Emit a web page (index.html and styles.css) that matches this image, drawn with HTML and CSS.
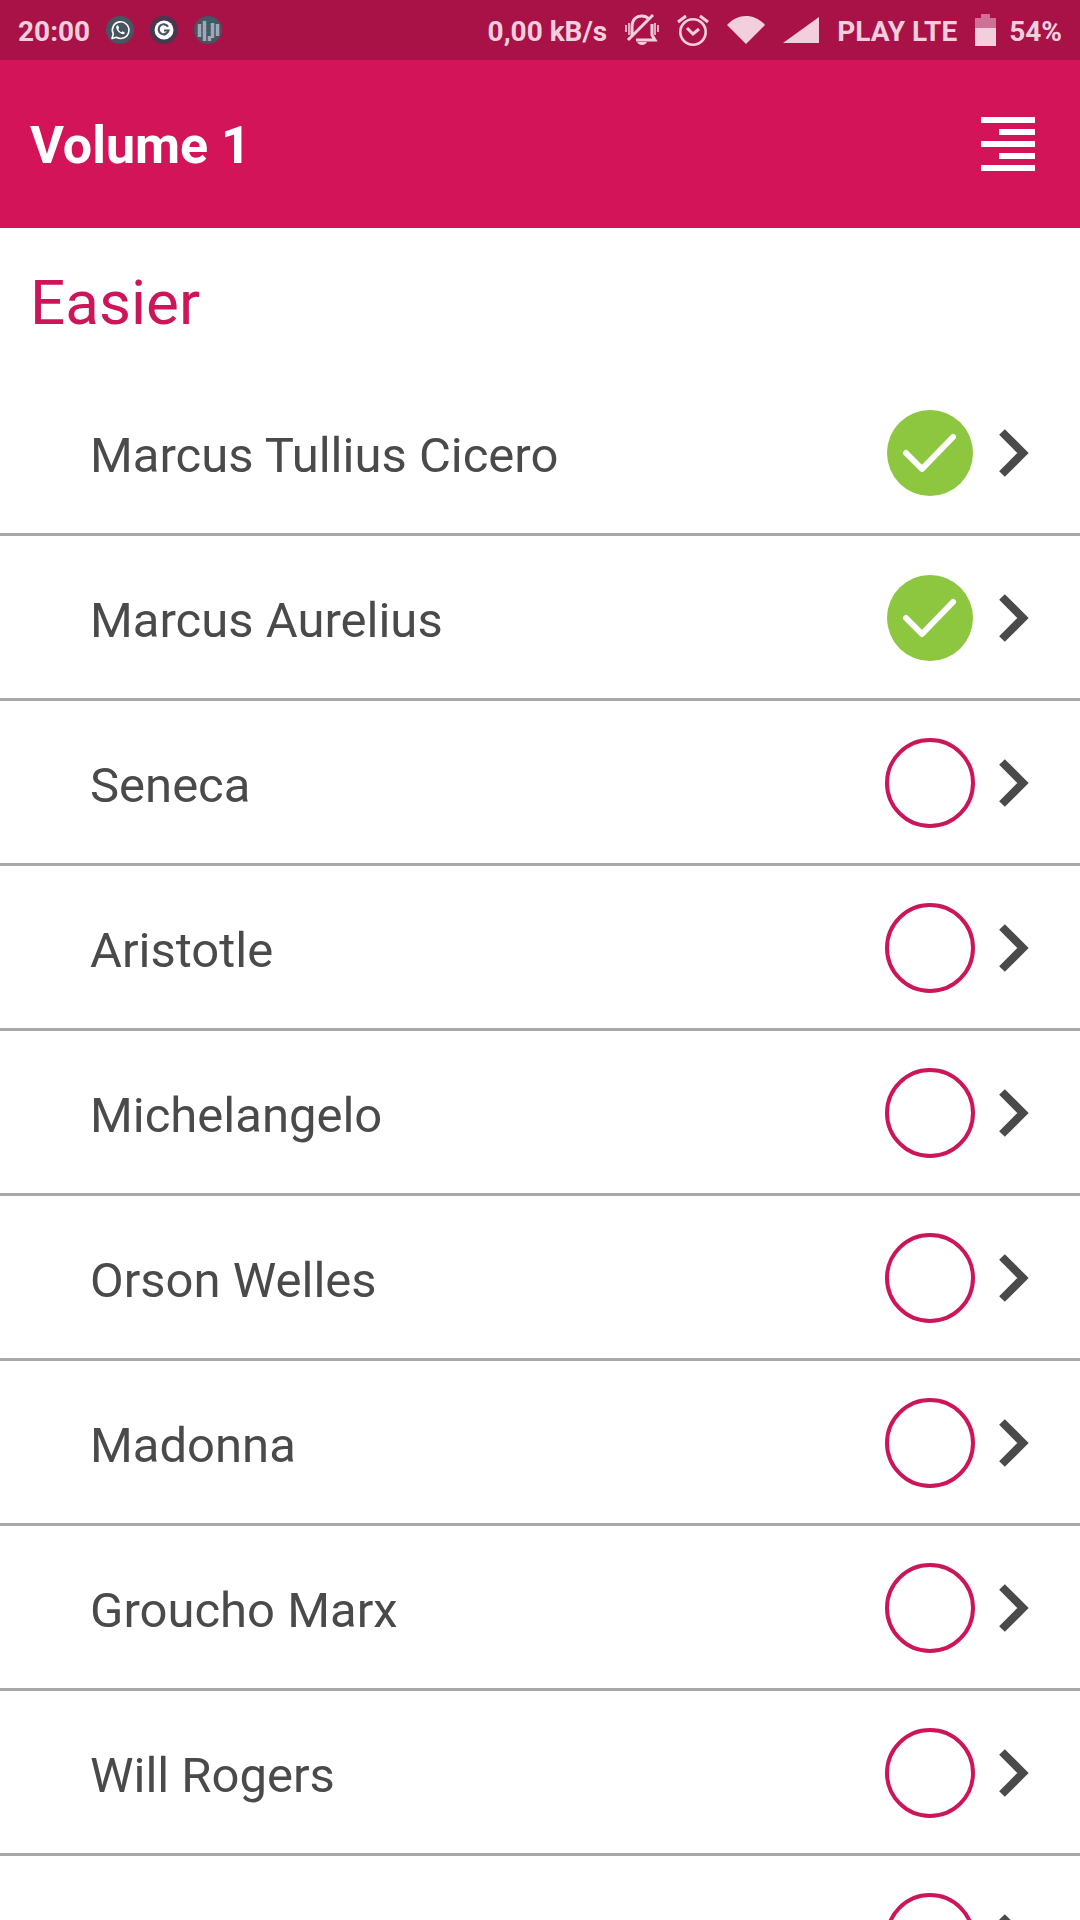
FILE: index.html
```html
<!DOCTYPE html>
<html lang="en">
<head>
    <meta charset="UTF-8">
    <meta name="viewport" content="width=device-width, initial-scale=1.0">
    <title>Volume 1</title>
    <link rel="stylesheet" href="styles.css">
</head>

<body>
    <!-- Shared icons -->
    <svg class="sprite" aria-hidden="true">
        <symbol id="done" viewBox="0 0 90 90">
            <circle cx="45" cy="45" r="43" fill="#8dc63f"/>
            <path d="M21 45L37 61L68 29" fill="none" stroke="#fff" stroke-width="6" stroke-linecap="round" stroke-linejoin="round"/>
        </symbol>
        <symbol id="todo" viewBox="0 0 90 90">
            <circle cx="45" cy="45" r="43" fill="none" stroke="#cd1659" stroke-width="4"/>
        </symbol>
        <symbol id="chevron" viewBox="0 0 30 48">
            <path d="M3 3L24 24L3 45" fill="none" stroke="#4a4a4a" stroke-width="8"/>
        </symbol>
    </svg>

    <div class="screen">
        <div class="status-bar">
            <div class="status-left">
                <span>20:00</span>
                <svg class="notice" viewBox="0 0 28 28" aria-hidden="true">
                    <circle cx="14" cy="14" r="14" fill="#465560"/>
                    <path d="M6 22.500L7.300 18A8.300 8.300 0 1 1 10.300 21.200Z" fill="none" stroke="#fff" stroke-width="1.600" stroke-linejoin="round"/>
                    <path d="M11 9.500C9 11 11 14.500 13 16.300C15 18.200 18 19 19 17L16.700 15.300L15.300 16.300C14 15.800 13 14.700 12.300 13.300L13.200 12L12 9.300Z" fill="#fff"/>
                </svg>
                <svg class="notice" viewBox="0 0 28 28" aria-hidden="true">
                    <circle cx="14" cy="14" r="14" fill="#46384f"/>
                    <circle cx="14" cy="14" r="9.500" fill="#fff"/>
                    <path d="M18 10.800A5 5 0 1 0 18.500 14.500H14" fill="none" stroke="#465560" stroke-width="2.200"/>
                </svg>
                <svg class="notice" viewBox="0 0 28 28" aria-hidden="true">
                    <circle cx="14" cy="14" r="14" fill="#465560"/>
                    <path d="M7 4.500H21M4 8.500H24M2 12.500H26M2 16.500H26" stroke="#2f6a6e" stroke-width="1.500"/>
                    <path d="M5.500 8V21M10.500 5V25M15.500 20V25M18.500 7V22M23.500 8V20" stroke="#a5a5b6" stroke-width="3.500"/>
                </svg>
            </div>
            <div class="status-right">
                <span>0,00 kB/s</span>
                <svg class="bell" viewBox="0 0 34 32" aria-hidden="true">
                    <path d="M7 23V13C7 6 11 2 17 2C20 2 22 3 24 5M27 10V21L30 26H11M3 26L28 1" fill="none" stroke="currentColor" stroke-width="3"/>
                    <path d="M12 28H22C20 32 14 32 12 28Z" fill="currentColor"/>
                    <path d="M1 11V18M4 9V21M30 9V21M33 11V18" stroke="currentColor" stroke-width="1.600"/>
                </svg>
                <svg class="alarm" viewBox="0 0 32 32" aria-hidden="true">
                    <circle cx="16" cy="18" r="12.700" fill="none" stroke="currentColor" stroke-width="2.600"/>
                    <path d="M10 14L16 20L22 15M1 8L9 2M31 8L23 2" fill="none" stroke="currentColor" stroke-width="3"/>
                </svg>
                <svg class="wifi" viewBox="0 0 38 28" aria-hidden="true">
                    <path d="M0 9C11 -3 27 -3 38 9L19 28Z" fill="currentColor"/>
                </svg>
                <svg class="signal" viewBox="0 0 36 26" aria-hidden="true">
                    <path d="M0 26L36 0V26Z" fill="currentColor"/>
                </svg>
                <span>PLAY LTE</span>
                <div class="charge">
                    <svg class="battery" viewBox="0 0 21 32" aria-hidden="true">
                        <path d="M6 0H15V4H21V14H0V4H6Z" fill="#cd7196"/>
                        <path d="M0 14H21V32H0Z" fill="currentColor"/>
                    </svg>
                    <span>54%</span>
                </div>
            </div>
        </div>

        <header class="app-bar">
            <h1>Volume 1</h1>
            <button class="menu" type="button" aria-label="Menu">
                <svg viewBox="0 0 54 54" aria-hidden="true">
                    <path d="M0 3H54M18 15H54M0 27H54M18 39H54M0 51H54" stroke="#fff" stroke-width="6"/>
                </svg>
            </button>
        </header>

        <main>
            <h2>Easier</h2>
            <ul class="list">
                <li><a class="row" href="#"><span class="name">Marcus Tullius Cicero</span><svg class="state"><use href="#done"/></svg><svg class="chevron"><use href="#chevron"/></svg></a></li>
                <li><a class="row" href="#"><span class="name">Marcus Aurelius</span><svg class="state"><use href="#done"/></svg><svg class="chevron"><use href="#chevron"/></svg></a></li>
                <li><a class="row" href="#"><span class="name">Seneca</span><svg class="state"><use href="#todo"/></svg><svg class="chevron"><use href="#chevron"/></svg></a></li>
                <li><a class="row" href="#"><span class="name">Aristotle</span><svg class="state"><use href="#todo"/></svg><svg class="chevron"><use href="#chevron"/></svg></a></li>
                <li><a class="row" href="#"><span class="name">Michelangelo</span><svg class="state"><use href="#todo"/></svg><svg class="chevron"><use href="#chevron"/></svg></a></li>
                <li><a class="row" href="#"><span class="name">Orson Welles</span><svg class="state"><use href="#todo"/></svg><svg class="chevron"><use href="#chevron"/></svg></a></li>
                <li><a class="row" href="#"><span class="name">Madonna</span><svg class="state"><use href="#todo"/></svg><svg class="chevron"><use href="#chevron"/></svg></a></li>
                <li><a class="row" href="#"><span class="name">Groucho Marx</span><svg class="state"><use href="#todo"/></svg><svg class="chevron"><use href="#chevron"/></svg></a></li>
                <li><a class="row" href="#"><span class="name">Will Rogers</span><svg class="state"><use href="#todo"/></svg><svg class="chevron"><use href="#chevron"/></svg></a></li>
                <li><a class="row" href="#"><span class="name"></span><svg class="state"><use href="#todo"/></svg><svg class="chevron"><use href="#chevron"/></svg></a></li>
            </ul>
        </main>
    </div>
</body>
</html>
```
FILE: styles.css
```css
* {
    box-sizing: border-box;
}

body {
    margin: 0;
    font-family: Roboto, sans-serif;
    background-color: #fff;
    color: #4a4a4a;
}

svg {
    display: block;
    flex-shrink: 0;
}

.sprite {
    position: absolute;
    width: 0;
    height: 0;
}

.screen {
    display: flex;
    flex-direction: column;
    height: 100vh;
    overflow: hidden;
}

/* Status bar */
.status-bar {
    display: flex;
    flex-shrink: 0;
    justify-content: space-between;
    min-height: 60px;
    padding: 0 18px;
    background-color: #a91247;
    color: #f3cfde;
    font-size: 28px;
    font-weight: 700;
    line-height: 36px;
    white-space: nowrap;
}

.status-bar span {
    padding-top: 3px;
}

.status-left,
.status-right,
.charge {
    display: flex;
    align-items: center;
    gap: 16px;
}

.status-right {
    gap: 18px;
}

.charge {
    gap: 13px;
}

.notice {
    width: 28px;
    height: 28px;
}

.bell {
    width: 34px;
    height: 32px;
}

.alarm {
    width: 32px;
    height: 32px;
}

.wifi {
    width: 38px;
    height: 28px;
}

.signal {
    width: 36px;
    height: 26px;
}

.battery {
    width: 21px;
    height: 32px;
}

/* Title bar */
.app-bar {
    display: flex;
    flex-shrink: 0;
    align-items: center;
    justify-content: space-between;
    padding: 54px 45px 54px 30px;
    background-color: #d31459;
    color: #fff;
}

h1 {
    margin: 0;
    padding-top: 4px;
    font-size: 52px;
    font-weight: 700;
    line-height: 56px;
}

.menu {
    padding: 0;
    border: none;
    background: none;
    cursor: pointer;
}

.menu svg {
    width: 54px;
    height: 54px;
}

/* List */
main {
    flex: 1;
    min-height: 0;
    overflow: hidden;
}

h2 {
    margin: 0;
    padding: 39px 30px 32px;
    color: #cd1659;
    font-size: 62px;
    font-weight: 400;
    line-height: 72px;
}

.list {
    margin: 0;
    padding: 0;
    list-style: none;
}

.row {
    display: flex;
    align-items: center;
    height: 165px;
    padding: 2px 51px 0 90px;
    border-bottom: 3px solid #a8a8a8;
    color: inherit;
    text-decoration: none;
}

.name {
    flex: 1;
    padding-top: 5px;
    font-size: 49px;
    line-height: 60px;
}

.state {
    width: 90px;
    height: 90px;
    margin-right: 24px;
}

.chevron {
    width: 30px;
    height: 48px;
}
```
